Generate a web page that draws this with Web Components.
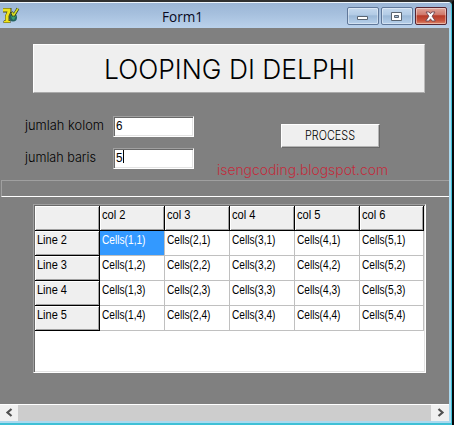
<!DOCTYPE html>
<html lang="id"><head><meta charset="utf-8"><title>Form1</title>
<style>html,body{margin:0;height:100%;overflow:hidden;background:#000}</style></head>
<body><delphi-window></delphi-window>
<script>
const define=(name,html)=>customElements.define(name,class extends HTMLElement{
  connectedCallback(){
    if(this.shadowRoot)return;
    const t=document.createElement('template');
    t.innerHTML=typeof html==='function'?html(this):html;
    this.attachShadow({mode:'open'}).append(t.content.cloneNode(true));
  }
});
// A single line of text fitted to a given width
define('fit-text',el=>{
  const a=(n,d)=>el.getAttribute(n)||d, w=a('w'), h=+a('h',16);
  return `<style>:host{display:block;flex:none;width:${w}px;height:${h}px}svg{display:block;overflow:visible}
  text{font-family:${a('font','"Liberation Sans"')},sans-serif;font-size:${a('size',11)}px;font-weight:${a('weight',400)};fill:${a('color','#000')}}</style>
  <svg width="${w}" height="${h}"><text x="0" y="${a('base',h-3)}" textLength="${w}" lengthAdjust="spacingAndGlyphs">${a('text','')}</text></svg>`;
});
define('caption-button',el=>{
  const k=el.getAttribute('kind');
  const g={min:'<path d="M10.5 8.5h10v3h-10z" fill="#fff" stroke="#5a6572"/>',
    max:'<path d="M10.500 4.500h10v8h-10z" fill="#fff" stroke="#5a6572"/><path d="M13.500 7.500h4v2h-4z" fill="#a7bdd6" stroke="#5a6572"/>',
    close:'<path d="M11 4h3.200l1.300 1.800L16.800 4H20l-2.900 4.200L20.300 13H17l-1.500-2.200L14 13h-3.300l3.200-4.800z" fill="#fff" stroke="#6b4650" stroke-width=".9"/>'}[k];
  return `<style>:host{display:block;box-sizing:border-box;width:32px;height:18px;border:1px solid ${k==='close'?'#572431':'#60789a'};border-radius:2px;
  background:${k==='close'?'linear-gradient(#dfa69b,#cf7669 44%,#b73a28 48%,#c9553f 80%,#dc8b70)':'linear-gradient(#c5d9ee,#b1cae5 45%,#9bb8d7 48%,#b7d0ea)'};box-shadow:inset 0 0 0 1px #ffffff66}
  svg{display:block;margin:-.5px 0 0 -1px}</style><svg width="32" height="18">${g}</svg>`;
});
define('app-icon',`<style>:host{display:block;width:18px;height:18px}svg{display:block}</style>
<svg width="18" height="18" viewBox="0 0 18 18"><circle cx="11" cy="10.500" r="4" fill="#23635f"/><path d="M9 9l3-2 2 2-2 4-2-1z" fill="#3c9e70"/>
<path d="M1 1h8.500v3.500L7.500 9v4l1 .500V16H1.500v-2l1.500-1V9L4.500 5.500H1z" fill="#4d4b16"/><path d="M1 1.500h7.500v3L6.500 9v5h1.500v1.500H2V14h1.500V9L5.500 4.500H1z" fill="#eee41c"/>
<path d="M9.500 5l2 4M16 1.500l-4.500 7.500" stroke="#28361c" stroke-width="3"/><path d="M10 5.500l1.500 3M16 1.500l-4.500 7" stroke="#d4dc26" stroke-width="1.700"/></svg>`);
define('title-bar',`<style>:host{display:flex;box-sizing:border-box;height:26px;border-top:1px solid #edf5fc;background:linear-gradient(#9cb6d6,#a5bfdd 40%,#bad1eb);padding:4px 4px 0 2px}
.t{margin-left:142px}.b{display:flex;gap:2px;margin-left:auto}</style>
<app-icon></app-icon><fit-text class="t" text="Form1" w="41" size="15" h="18" base="14.500" font="'Open Sans'" color="#080820"></fit-text>
<div class="b"><caption-button kind="min"></caption-button><caption-button kind="max"></caption-button><caption-button kind="close"></caption-button></div>`);
define('head-panel',`<style>:host{display:block;box-sizing:border-box;height:49px;margin:0 24px 0 33px;background:#efefef;border:1px solid;border-color:#fff #bbb #aaa #fff;padding:0 0 0 70px}</style><slot></slot>`);
define('text-edit',el=>`<style>:host{display:flex;box-sizing:border-box;width:81px;height:21px;background:#fff;border:1px solid;border-color:#a0a0a0 #fff #fff #a0a0a0;box-shadow:inset 1px 1px #696969,inset -1px -1px #e3e3e3;padding:1px 0 0 2px}
i{width:1px;height:13px;background:#000}</style><fit-text text="${el.getAttribute('value')}" w="6.500" size="13" base="12" h="16"></fit-text>${el.hasAttribute('focused')?'<i></i>':''}`);
define('push-button',`<style>:host{display:block;box-sizing:border-box;width:99px;height:24px;background:#efefef;border:1px solid;border-color:#fff #696969 #696969 #fff;box-shadow:inset -1px -1px #b5b5b5;padding:0 0 0 23px}</style><slot></slot>`);
define('form-fields',`<style>:host{display:grid;grid-template-columns:88px 168px 99px;padding:0 0 0 25px;height:64px;grid-template-rows:32px 32px}
fit-text{margin-top:1px}.p{margin-top:8px}.p fit-text{margin:0}.m{grid-column:2/4;grid-row:2;margin:12px 0 0 104px}text-edit{grid-column:2}.e2{grid-row:2}.l2{grid-row:2}</style>
<fit-text text="jumlah kolom" w="79" size="13" h="18" base="12.500" font="Inter" weight="300"></fit-text><text-edit value="6"></text-edit>
<push-button class="p"><fit-text text="PROCESS" w="50" size="13" h="20" base="15" font="Inter" weight="300"></fit-text></push-button>
<fit-text class="l2" text="jumlah baris" w="71" size="13" h="18" base="12.500" font="Inter" weight="300"></fit-text><text-edit class="e2" value="5" focused></text-edit>
<fit-text class="m" text="isengcoding.blogspot.com" w="171" size="14" h="20" base="14.500" font="Inter" weight="300" color="#c22c3d"></fit-text>`);
define('split-panel',`<style>:host{display:block;box-sizing:border-box;height:17px;margin-left:1px;border:solid #a0a0a0;border-width:1px 0 1px 1px;border-bottom-color:#fff}</style>`);
define('grid-cell',el=>{
  const k=el.getAttribute('kind'),f=k==='fixed';
  return `<style>:host{display:block;box-sizing:border-box;border:solid ${f?'#000':'#c0c0c0'};border-width:0 1px 1px 0;padding-left:2px;
  background:${f?'#efefef':k==='sel'?'#3399ff':'#fff'};${f?'box-shadow:inset 1px 1px #fff,inset -1px -1px #a0a0a0':''}}</style>
  ${el.getAttribute('text')?`<fit-text text="${el.getAttribute('text')}" w="${el.getAttribute('w')}" size="12" h="20" base="13" color="${k==='sel'?'#fff':'#000'}"></fit-text>`:''}`;
});
define('string-grid',()=>{
  let c='';
  for(let r=0;r<5;r++)for(let i=0;i<6;i++){
    const k=!r||!i?'fixed':r===1&&i===1?'sel':'cell';
    const [t,w]=!r?(i?['col '+(i+1),23.5]:['',0]):i?[`Cells(${i},${r})`,43.5]:['Line '+(r+1),30];
    c+=`<grid-cell kind="${k}" text="${t}" w="${w}"></grid-cell>`;
  }
  return `<style>:host{display:grid;box-sizing:border-box;width:393px;height:169px;margin:7px 0 0 33px;background:#fff;border:1px solid;border-color:#a0a0a0 #fff #fff #a0a0a0;box-shadow:inset 1px 1px #696969,inset -1px -1px #e3e3e3;padding:1px;
  grid-template-columns:repeat(5,65px) 64px;grid-template-rows:repeat(5,25px)}</style>${c}`;
});
define('scroll-bar',`<style>:host{display:flex;box-sizing:border-box;height:17px;border-top:1px solid #fff;background:#cdcdcd;justify-content:space-between}
span{width:18px;background:#f0f0f0}svg{display:block}</style><span><svg width="18" height="16"><path d="M11.500 4L7.500 7.500l4 3.500" fill="none" stroke="#505050" stroke-width="2.200"/></svg></span><span><svg width="18" height="16"><path d="M7.500 4l4 3.500-4 3.500" fill="none" stroke="#505050" stroke-width="2.200"/></svg></span>`);
define('delphi-window',`<style>:host{display:flex;flex-direction:column;box-sizing:border-box;width:454px;height:425px;border:solid #303030;border-width:2px 2px 0 0;border-right-color:#050709;background:#303030}
.f{display:flex;flex-direction:column;box-sizing:border-box;height:423px;border:solid #3fc0d6;border-width:0 1px 2px 0;border-radius:0 4px 0 0;overflow:hidden;background:#abd9ef}
.c{height:376px;margin-right:2px;background:#808080;box-sizing:border-box;padding-top:16px}.g{height:23px}scroll-bar{margin-right:2px}</style>
<div class="f"><title-bar></title-bar><div class="c"><head-panel><fit-text text="LOOPING DI DELPHI" w="251" size="27.5" h="46" base="33.500" font="Inter" weight="300"></fit-text></head-panel>
<div class="g"></div><form-fields></form-fields><split-panel></split-panel><string-grid></string-grid></div><scroll-bar></scroll-bar></div>`);
</script></body></html>
